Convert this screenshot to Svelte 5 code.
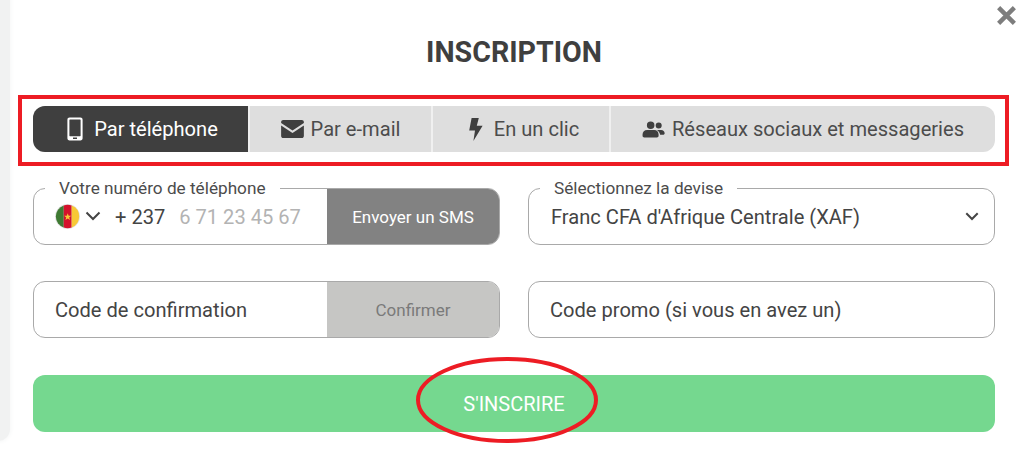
<script>
  const tabs = [
    { label: 'Par téléphone', icon: 'phone', width: 217 },
    { label: 'Par e-mail', icon: 'mail', width: 183 },
    { label: 'En un clic', icon: 'bolt', width: 178 },
    { label: 'Réseaux sociaux et messageries', icon: 'users', width: 384 }
  ];
</script>

<div class="page">
  <div class="backdrop"></div>
  <button class="close" aria-label="Fermer">
    <svg viewBox="0 0 20 20" width="21" height="21"><path d="M2.5 2.5 L17.5 17.5 M17.5 2.5 L2.5 17.5" stroke="#7d7d7d" stroke-width="4.2" fill="none"/></svg>
  </button>

  <h1>INSCRIPTION</h1>

  <div class="highlight">
    <div class="tabs">
      {#each tabs as tab, i}
        <div class="tab {tab.icon}" class:active={i === 0} style="width:{tab.width}px">
          {#if tab.icon === 'phone'}
            <svg viewBox="0 0 16 24" width="16" height="24"><path fill-rule="evenodd" fill="currentColor" d="M2.6 0.5 H13.4 C14.7 0.5 15.6 1.4 15.6 2.7 V21.3 C15.6 22.6 14.7 23.5 13.4 23.5 H2.6 C1.3 23.5 0.4 22.6 0.4 21.3 V2.7 C0.4 1.4 1.3 0.5 2.6 0.5 Z M2.4 3 V18.8 C2.4 19.1 2.6 19.3 2.9 19.3 H13.1 C13.4 19.3 13.6 19.1 13.6 18.8 V3 C13.6 2.7 13.4 2.5 13.1 2.5 H2.9 C2.6 2.5 2.4 2.7 2.4 3 Z M6 20.6 V22 H10 V20.6 Z"/></svg>
          {:else if tab.icon === 'mail'}
            <svg viewBox="0 0 24 19" width="23" height="18"><path fill="currentColor" d="M2.2 0 H21.8 C23 0 24 1 24 2.2 V3.2 L12 11.2 L0 3.2 V2.2 C0 1 1 0 2.2 0 Z M0 5.8 L12 13.8 L24 5.8 V16.8 C24 18 23 19 21.8 19 H2.2 C1 19 0 18 0 16.8 Z"/></svg>
          {:else if tab.icon === 'bolt'}
            <svg viewBox="0 0 15 23" width="15" height="23"><path fill="currentColor" d="M3.6 0 H10.8 L8.8 7.8 H14.6 L5.4 23 L7 12.6 H1.2 Z"/></svg>
          {:else}
            <svg viewBox="0 0 24 18" width="23" height="17"><path fill="currentColor" d="M9 0.4 A4 4 0 1 1 9 8.4 A4 4 0 1 1 9 0.4 Z M17.5 1.6 A3.2 3.2 0 1 1 17.5 8 A3.2 3.2 0 1 1 17.5 1.6 Z M5.2 9.6 H12.8 C15.6 9.6 17.4 11.6 17.4 14.2 V15.6 C17.4 16.7 16.6 17.4 15.6 17.4 H2.2 C1.2 17.4 0.4 16.7 0.4 15.6 V14.2 C0.4 11.6 2.4 9.6 5.2 9.6 Z M15.6 9.4 H20.2 C22.2 9.4 23.8 11 23.8 13 C23.8 14 23.2 14.6 22.2 14.6 H19 C18.8 12.6 17.6 10.6 15.6 9.4 Z"/></svg>
          {/if}
          <span>{tab.label}</span>
        </div>
      {/each}
    </div>
  </div>

  <div class="grid">
    <div class="field split">
      <span class="legend">Votre numéro de téléphone</span>
      <div class="input">
        <svg class="flag" viewBox="0 0 24 24" width="25" height="25">
          <circle cx="12" cy="12" r="12" fill="#e4e4e4"/>
          <path d="M8.4 1.4 A11.2 11.2 0 0 0 8.4 22.6 Z" fill="#3f7a33"/>
          <path d="M8.4 1.4 A11.2 11.2 0 0 1 16 1.54 V22.46 A11.2 11.2 0 0 1 8.4 22.6 Z" fill="#d4122c"/>
          <path d="M16 1.54 A11.2 11.2 0 0 1 16 22.46 Z" fill="#f7c936"/>
          <path d="M12.2 8.8 L13.1 11.3 L15.6 11.3 L13.6 12.9 L14.4 15.4 L12.2 13.9 L10 15.4 L10.8 12.9 L8.8 11.3 L11.3 11.3 Z" fill="#f7c936"/>
        </svg>
        <svg class="chev" viewBox="0 0 16 10" width="16" height="10"><path d="M1.5 1.5 L8 8 L14.5 1.5" stroke="#444" stroke-width="2" fill="none"/></svg>
        <span class="prefix">+ 237</span>
        <span class="placeholder">6 71 23 45 67</span>
      </div>
      <div class="action send">Envoyer un SMS</div>
    </div>

    <div class="field">
      <span class="legend">Sélectionnez la devise</span>
      <div class="input select">
        <span>Franc CFA d'Afrique Centrale (XAF)</span>
        <svg viewBox="0 0 14 9" width="14" height="9"><path d="M1.3 1.3 L7 7 L12.7 1.3" stroke="#444" stroke-width="2" fill="none"/></svg>
      </div>
    </div>

    <div class="field split">
      <div class="input"><span>Code de confirmation</span></div>
      <div class="action confirm">Confirmer</div>
    </div>

    <div class="field">
      <div class="input"><span>Code promo (si vous en avez un)</span></div>
    </div>
  </div>

  <div class="submit-wrap">
    <div class="submit">S'INSCRIRE</div>
    <svg class="ellipse" viewBox="0 0 184 90" width="184" height="90"><ellipse cx="92" cy="45" rx="89" ry="41" fill="none" stroke="#ed1c24" stroke-width="4"/></svg>
  </div>
</div>

<style>
  :global(body) { margin: 0; background: #fff; }
  .page {
    position: relative;
    width: 1024px;
    height: 458px;
    overflow: hidden;
    box-sizing: border-box;
    padding: 0 29px 0 33px;
    font-family: Roboto, "Liberation Sans", sans-serif;
    color: #444;
  }
  .backdrop {
    position: absolute;
    left: -20px;
    top: -20px;
    width: 30px;
    height: 461px;
    background: #f1f2f2;
    border-radius: 12px;
    box-shadow: 0 0 4px 1px #f6f7f7;
  }
  .close {
    position: absolute;
    right: 7px;
    top: 5px;
    padding: 0;
    border: 0;
    background: none;
    line-height: 0;
  }
  h1 {
    position: relative;
    margin: 0;
    padding-top: 34px;
    font-size: 28.6px;
    line-height: 36px;
    height: 36px;
    font-weight: 700;
    text-align: center;
    color: #3f3f3f;
  }
  .highlight {
    margin: 25px -14px 0 -15px;
    padding: 7px 10px 10px 11px;
    border: 4px solid #ed1c24;
    height: 71px;
    box-sizing: border-box;
  }
  .tabs {
    display: flex;
    height: 46px;
    background: #dedede;
    border-radius: 12px;
    overflow: hidden;
  }
  .tab {
    display: flex;
    align-items: center;
    justify-content: center;
    gap: 7px;
    font-size: 20.1px;
    color: #4c4c4c;
    box-sizing: border-box;
    border-right: 2px solid #f0f0f0;
    flex: none;
  }
  .tab:last-child { border-right: 0; }
  .tab.phone { gap: 11px; padding-left: 4px; }
  .tab.bolt { gap: 11px; padding-left: 5px; }
  .tab.active {
    background: #3f3f3f;
    color: #fff;
  }
  .tab svg { color: #3f3f3f; flex: none; }
  .tab.active svg { color: #fff; }
  .grid {
    display: grid;
    grid-template-columns: 467px 467px;
    column-gap: 28px;
    row-gap: 36px;
    margin-top: 22px;
  }
  .field {
    position: relative;
    display: flex;
    height: 57px;
    box-sizing: border-box;
    border: 1px solid #a9a9a9;
    border-radius: 12px;
    font-size: 20.1px;
    color: #444;
  }
  .legend {
    position: absolute;
    left: 11px;
    top: -11px;
    padding: 0 14px;
    background: #fff;
    font-size: 17.2px;
    line-height: 20px;
    color: #4c4c4c;
    z-index: 1;
  }
  .input {
    flex: 1;
    min-width: 0;
    display: flex;
    align-items: center;
    padding: 0 0 0 21px;
  }
  .flag { flex: none; margin-right: 5px; }
  .chev { flex: none; margin-right: 14px; margin-top: -2px; }
  .prefix { color: #444; margin-right: 14px; }
  .placeholder { color: #b3b3b3; }
  .action {
    width: 172px;
    flex: none;
    display: flex;
    align-items: center;
    justify-content: center;
    border-radius: 0 11px 11px 0;
    font-size: 17px;
  }
  .send { background: #828282; color: #fff; }
  .confirm { background: #c6c6c4; color: #7a7a7a; }
  .select {
    justify-content: space-between;
    padding-left: 22px;
    padding-right: 15px;
  }
  .submit-wrap {
    position: relative;
    margin-top: 37px;
  }
  .submit {
    height: 57px;
    border-radius: 12px;
    background: #75d88f;
    color: #fff;
    display: flex;
    align-items: center;
    justify-content: center;
    font-size: 20px;
  }
  .ellipse {
    position: absolute;
    left: 382px;
    top: -20px;
  }
</style>
